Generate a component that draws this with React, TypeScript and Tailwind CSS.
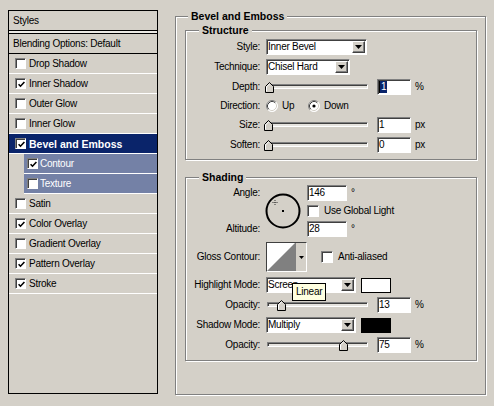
import React from 'react'

const sunken =
  'border border-t-[#808080] border-l-[#808080] border-r-white border-b-white shadow-[inset_1px_1px_0_#404040]'

function Check({ on, big }: { on?: boolean; big?: boolean }) {
  return (
    <span
      className={`flex shrink-0 items-center justify-center bg-white ${sunken} ${big ? 'h-[12px] w-[12px]' : 'h-[11px] w-[11px]'}`}
    >
      {on && (
        <svg width="7" height="7" viewBox="0 0 7 7" className="ml-[1px] mt-[1px]">
          <path d="M0.6 3.2 L2.5 5.2 L6.4 1" stroke="black" strokeWidth="1.6" fill="none" />
        </svg>
      )}
    </span>
  )
}

function Radio({ on }: { on?: boolean }) {
  return (
    <svg width="12" height="12" viewBox="0 0 12 12" className="shrink-0">
      <circle cx="6" cy="6" r="5.5" fill="white" />
      <path d="M2.11 9.89 A5.5 5.5 0 0 1 9.89 2.11" stroke="#808080" fill="none" />
      <path d="M2.82 9.18 A4.5 4.5 0 0 1 9.18 2.82" stroke="#404040" fill="none" />
      <path d="M9.89 2.11 A5.5 5.5 0 0 1 2.11 9.89" stroke="#ffffff" fill="none" />
      <path d="M9.18 2.82 A4.5 4.5 0 0 1 2.82 9.18" stroke="#d4d0c8" fill="none" />
      {on && <circle cx="6" cy="6" r="1.6" fill="black" />}
    </svg>
  )
}

function Select({ value, w }: { value: string; w: string }) {
  return (
    <div className={`flex h-[16px] items-center bg-white ${sunken} ${w}`}>
      <span className="flex-1 pl-[1px]">{value}</span>
      <span className="mr-[1px] flex h-[12px] w-[13px] items-center justify-center border border-t-white border-l-white border-r-[#404040] border-b-[#404040] bg-[#d4d0c8] shadow-[inset_-1px_-1px_0_#808080]">
        <svg width="7" height="4" viewBox="0 0 7 4">
          <path d="M0 0 H7 L3.5 4 Z" fill="black" />
        </svg>
      </span>
    </div>
  )
}

function Field({ children, w = 'w-[34px]' }: { children: React.ReactNode; w?: string }) {
  return <div className={`flex h-[16px] items-center bg-white pl-[1px] ${sunken} ${w}`}>{children}</div>
}

function Slider({ pct }: { pct: number }) {
  return (
    <div className="relative h-[12px] w-[102px] shrink-0 pl-[1px]">
      <div className="mt-[3px] h-[5px] w-full border border-t-[#808080] border-l-[#808080] border-r-white border-b-white bg-[#e6e4df] shadow-[inset_1px_1px_0_#404040]" />
      <svg
        width="9"
        height="11"
        viewBox="0 0 9 11"
        className="absolute top-[1px]"
        style={{ left: 1 + pct * 101 - 3.5 }}
      >
        <path d="M4.5 0.5 L8.5 4.5 V10.5 H0.5 V4.5 Z" fill="#d4d0c8" stroke="black" />
        <path d="M4.5 1.9 L1.5 4.9 V9.5" stroke="white" fill="none" />
      </svg>
    </div>
  )
}

function Row({ label, h = 'h-[20px]', children }: { label: string; h?: string; children: React.ReactNode }) {
  return (
    <div className={`flex items-center ${h}`}>
      <span className="w-[74px] shrink-0 text-right">{label}</span>
      <div className="ml-[6px] flex items-center">{children}</div>
    </div>
  )
}

function SliderRow({ label, pct, value, unit }: { label: string; pct: number; value: React.ReactNode; unit: string }) {
  return (
    <Row label={label}>
      <Slider pct={pct} />
      <div className="ml-[9px]">
        <Field>{value}</Field>
      </div>
      <span className="ml-[4px]">{unit}</span>
    </Row>
  )
}

function Group({ title, titleLeft, className, children }: { title: string; titleLeft: string; className: string; children: React.ReactNode }) {
  return (
    <div className={`relative border border-[#808080] shadow-[inset_1px_1px_0_#ffffff,1px_1px_0_#ffffff] ${className}`}>
      <span className={`absolute top-[-8px] bg-[#d4d0c8] px-[3px] text-[10.5px] leading-[14px] font-bold tracking-normal ${titleLeft}`}>
        {title}
      </span>
      {children}
    </div>
  )
}

type Item = { label: string; on?: boolean; active?: boolean; sub?: boolean }

const items: Item[] = [
  { label: 'Drop Shadow' },
  { label: 'Inner Shadow', on: true },
  { label: 'Outer Glow' },
  { label: 'Inner Glow' },
  { label: 'Bevel and Emboss', on: true, active: true },
  { label: 'Contour', on: true, sub: true },
  { label: 'Texture', sub: true },
  { label: 'Satin' },
  { label: 'Color Overlay', on: true },
  { label: 'Gradient Overlay' },
  { label: 'Pattern Overlay', on: true },
  { label: 'Stroke', on: true },
]

function StyleItem({ label, on, active, sub }: Item) {
  if (sub) {
    return (
      <div className="flex h-[20px] pl-[15px]">
        <div className="flex flex-1 items-center border-b border-white bg-[#7481a6] pl-[3px] text-white">
          <Check on={on} />
          <span className="ml-[2px]">{label}</span>
        </div>
      </div>
    )
  }
  return (
    <div
      className={`flex h-[20px] items-center border-b border-white pl-[6px] ${active ? 'bg-[#0a246a] text-[10.5px] font-bold tracking-normal text-white' : ''}`}
    >
      <Check on={on} />
      <span className="ml-[3px]">{label}</span>
    </div>
  )
}

export default function App() {
  return (
    <div className="flex h-[406px] w-[494px] bg-[#d4d0c8] pl-[8px] font-['Liberation_Sans',Arial,sans-serif] text-[10px] leading-[12px] tracking-[-0.25px] text-black">
      {/* Styles list */}
      <div className="mt-[10px] flex h-[384px] w-[150px] flex-col border border-black">
        <div className="flex h-[20px] items-center border-b border-black pl-[4px]">Styles</div>
        <div className="h-[2px] bg-[#eceae5]" />
        <div className="flex h-[21px] items-center border-y border-black pl-[4px]">Blending Options: Default</div>
        {items.map((it) => (
          <StyleItem key={it.label} {...it} />
        ))}
      </div>

      {/* Bevel and Emboss */}
      <Group title="Bevel and Emboss" titleLeft="left-[12px]" className="ml-[17px] mt-[16px] h-[379px] w-[311px] pl-[9px] pt-[13px]">
        <Group title="Structure" titleLeft="left-[13px]" className="w-[292px] pb-[4px] pt-[6px]">
          <Row label="Style:">
            <Select value="Inner Bevel" w="w-[101px]" />
          </Row>
          <Row label="Technique:">
            <Select value="Chisel Hard" w="w-[84px]" />
          </Row>
          <SliderRow
            label="Depth:"
            pct={0.01}
            unit="%"
            value={
              <span className="flex items-center">
                <span className="h-[12px] w-[1px] bg-black" />
                <span className="bg-[#0a246a] px-[1px] text-white">1</span>
              </span>
            }
          />
          <Row label="Direction:" h="h-[18px]">
            <Radio />
            <span className="ml-[4px] w-[26px]">Up</span>
            <Radio on />
            <span className="ml-[4px]">Down</span>
          </Row>
          <SliderRow label="Size:" pct={0} value="1" unit="px" />
          <SliderRow label="Soften:" pct={0} value="0" unit="px" />
        </Group>

        <Group title="Shading" titleLeft="left-[13px]" className="mt-[17px] w-[292px] pb-[5px] pt-[5px]">
          <div className="flex">
            <div className="flex w-[74px] shrink-0 flex-col items-end">
              <span className="flex h-[20px] items-center">Angle:</span>
              <span className="h-[16px]" />
              <span className="flex h-[20px] items-center">Altitude:</span>
            </div>
            <svg width="36" height="36" viewBox="0 0 36 36" className="ml-[5px] mt-[10px] shrink-0">
              <circle cx="18" cy="18" r="16.5" stroke="black" strokeWidth="2" fill="none" />
              <rect x="17" y="17" width="2" height="2" fill="black" />
              <path d="M7.5 9.5 H12.5 M10 7 V12" stroke="#333" strokeWidth="1" strokeDasharray="1 1" />
            </svg>
            <div className="ml-[6px] flex flex-col">
              <div className="flex h-[20px] items-center">
                <Field w="w-[40px]">146</Field>
                <span className="ml-[4px]">°</span>
              </div>
              <div className="flex h-[16px] items-center">
                <Check big />
                <span className="ml-[5px]">Use Global Light</span>
              </div>
              <div className="flex h-[20px] items-center">
                <Field w="w-[40px]">28</Field>
                <span className="ml-[4px]">°</span>
              </div>
            </div>
          </div>

          <div className="mt-[3px] flex h-[30px] items-center">
            <span className="w-[74px] shrink-0 text-right">Gloss Contour:</span>
            <div className="ml-[6px] flex h-[30px] w-[41px] border border-t-[#404040] border-l-[#404040] border-r-white border-b-white bg-white">
              <svg width="28" height="28" viewBox="0 0 28 28" className="block shrink-0">
                <polygon points="0,28 28,0 28,28" fill="#808080" />
              </svg>
              <div className="flex flex-1 items-center justify-center border-l border-[#808080] bg-[#d4d0c8]">
                <svg width="5" height="3" viewBox="0 0 5 3">
                  <path d="M0 0 H5 L2.5 3 Z" fill="black" />
                </svg>
              </div>
            </div>
            <div className="ml-[14px]">
              <Check big />
            </div>
            <span className="ml-[5px]">Anti-aliased</span>
          </div>

          <div className="mt-[3px]">
            <Row label="Highlight Mode:">
              <div className="relative">
                <Select value="Screen" w="w-[90px]" />
                <div className="absolute left-[26px] top-[6px] z-10 flex h-[18px] items-center border border-black bg-[#ffffe1] px-[3px]">
                  Linear
                </div>
              </div>
              <div className="ml-[5px] h-[15px] w-[30px] border border-black bg-white" />
            </Row>
            <SliderRow label="Opacity:" pct={0.13} value="13" unit="%" />
            <Row label="Shadow Mode:">
              <Select value="Multiply" w="w-[90px]" />
              <div className="ml-[5px] h-[15px] w-[30px] border border-black bg-black" />
            </Row>
            <SliderRow label="Opacity:" pct={0.75} value="75" unit="%" />
          </div>
        </Group>
      </Group>
    </div>
  )
}
